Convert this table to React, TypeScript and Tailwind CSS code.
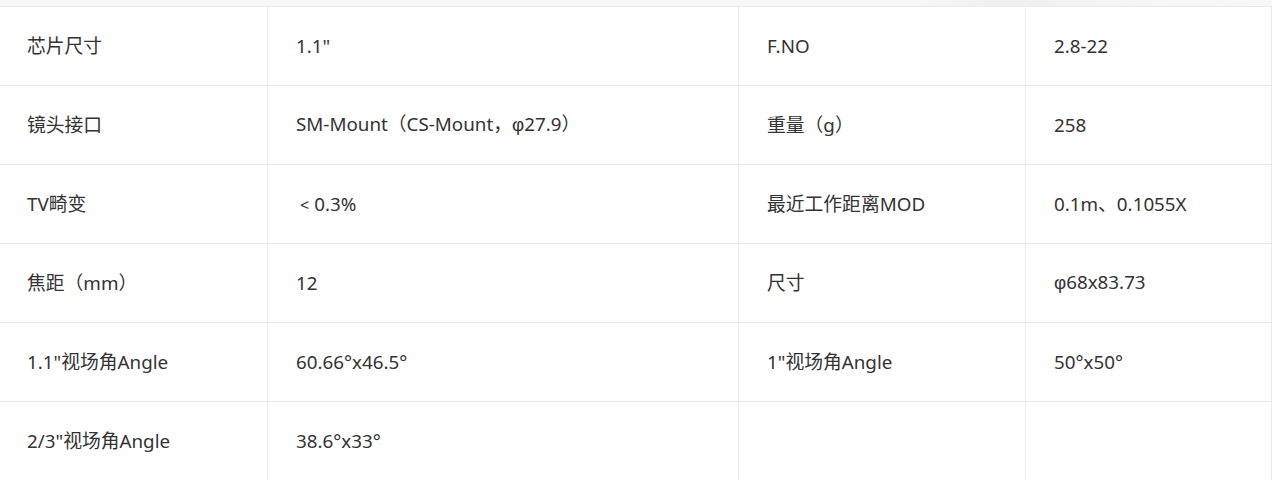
import React from 'react';

type Spec = { label: string; value: React.ReactNode; label2: string; value2: React.ReactNode };

const Phi = () => <span style={{ fontFamily: '"Liberation Sans", sans-serif' }}>φ</span>;

const specs: Spec[] = [
  { label: '芯片尺寸', value: '1.1"', label2: 'F.NO', value2: '2.8-22' },
  {
    label: '镜头接口',
    value: (
      <>
        SM-Mount（CS-Mount，<Phi />27.9）
      </>
    ),
    label2: '重量（g）',
    value2: '258',
  },
  {
    label: 'TV畸变',
    value: (
      <>
        <span className="ml-[4px] mr-[5px] text-[16px]">&lt;</span>0.3%
      </>
    ),
    label2: '最近工作距离MOD',
    value2: '0.1m、0.1055X',
  },
  {
    label: '焦距（mm）',
    value: '12',
    label2: '尺寸',
    value2: (
      <>
        <Phi />68x83.73
      </>
    ),
  },
  { label: '1.1"视场角Angle', value: '60.66°x46.5°', label2: '1"视场角Angle', value2: '50°x50°' },
  { label: '2/3"视场角Angle', value: '38.6°x33°', label2: '', value2: '' },
];

const Cell: React.FC<{ children: React.ReactNode; first?: boolean }> = ({ children, first }) => (
  <div
    className={`flex h-[79px] items-center whitespace-pre border-b border-r border-[#ebebeb] ${first ? 'pl-[27px]' : 'pl-[28px]'}`}
  >
    <span>{children}</span>
  </div>
);

const App: React.FC = () => {
  return (
    <div
      className="h-[480px] w-[1272px] overflow-hidden bg-white text-[18.8px] text-[#333]"
      style={{ fontFamily: '"Noto Sans", "Noto Sans CJK SC", sans-serif' }}
    >
      <div className="h-[6px] bg-[linear-gradient(90deg,#f7f8fa_0%,#f7f8fa_72%,#eeeff1_79%,#f5f6f8_88%,#f7f8fa_100%)]" />
      <div className="grid grid-cols-[268px_471px_287px_1fr] border-t border-[#ebebeb]">
        {specs.map((s) => (
          <React.Fragment key={s.label}>
            <Cell first>{s.label}</Cell>
            <Cell>{s.value}</Cell>
            <Cell>{s.label2}</Cell>
            <Cell>{s.value2}</Cell>
          </React.Fragment>
        ))}
      </div>
    </div>
  );
};

export default App;
